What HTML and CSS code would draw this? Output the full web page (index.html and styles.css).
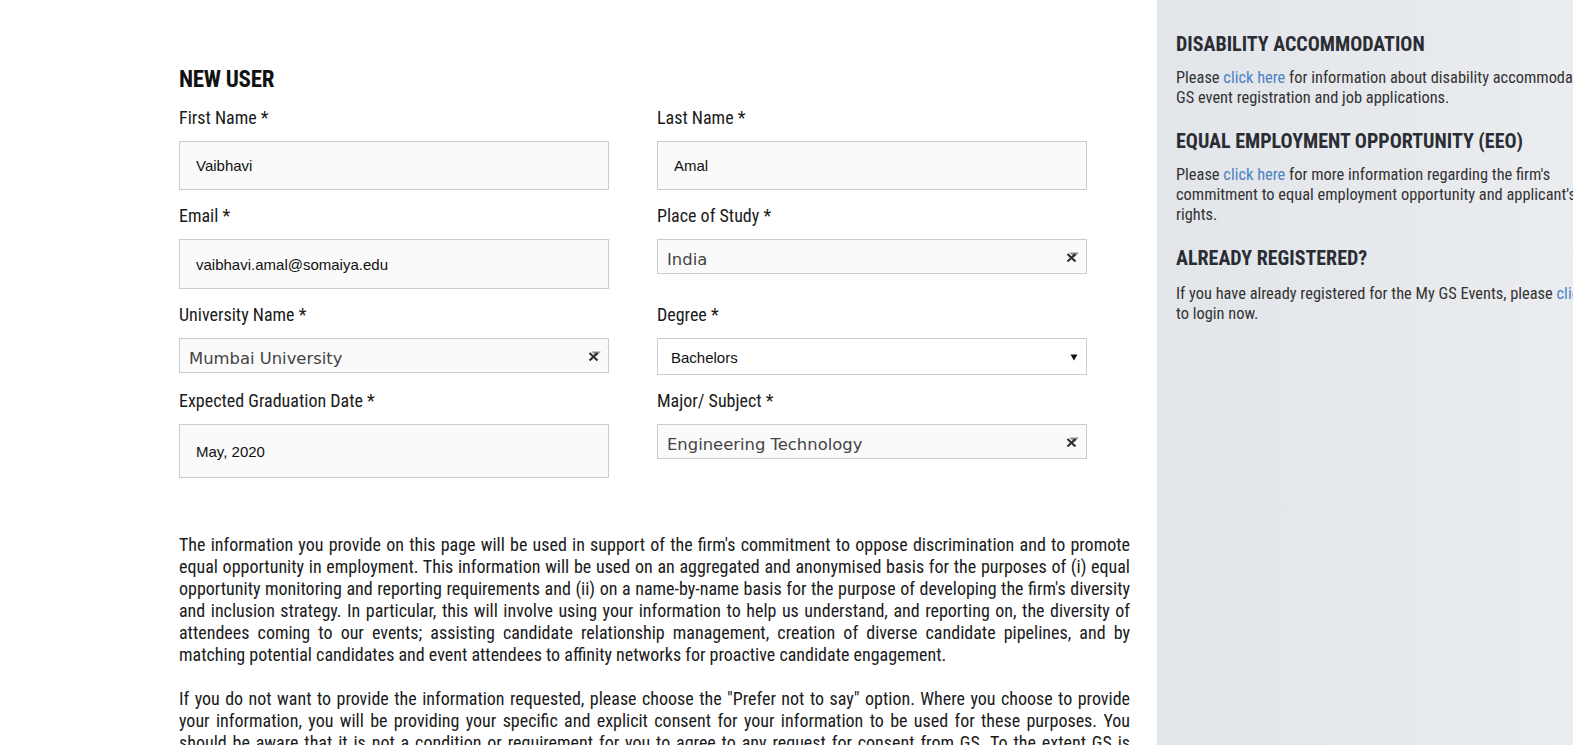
FILE: index.html
```html
<!DOCTYPE html>
<html lang="en">
<head>
<meta charset="utf-8">
<title>New User</title>
<link rel="stylesheet" href="styles.css">
</head>
<body>
<div class="page">
  <main class="main">
    <h1 class="title">NEW USER</h1>
    <div class="grid">
      <div class="field">
        <label class="label">First Name *</label>
        <input class="input h49" type="text" value="Vaibhavi">
      </div>
      <div class="field">
        <label class="label">Last Name *</label>
        <input class="input h49" type="text" value="Amal">
      </div>
      <div class="field">
        <label class="label">Email *</label>
        <input class="input h50" type="text" value="vaibhavi.amal@somaiya.edu">
      </div>
      <div class="field">
        <label class="label">Place of Study *</label>
        <div class="s2">
          <span class="s2-text">India</span>
          <svg class="s2-clear" width="13" height="10" viewBox="0 0 13 10"><path d="M3.5 0.5 H12.8 L8.2 5.5 Z" fill="#8c8c8c"/><path d="M1.5 2 L9.5 9.5 M9.5 2 L1.5 9.5" stroke="#2e2e2e" stroke-width="2.1"/></svg>
        </div>
      </div>
      <div class="field">
        <label class="label">University Name *</label>
        <div class="s2">
          <span class="s2-text">Mumbai University</span>
          <svg class="s2-clear" width="13" height="10" viewBox="0 0 13 10"><path d="M3.5 0.5 H12.8 L8.2 5.5 Z" fill="#8c8c8c"/><path d="M1.5 2 L9.5 9.5 M9.5 2 L1.5 9.5" stroke="#2e2e2e" stroke-width="2.1"/></svg>
        </div>
      </div>
      <div class="field">
        <label class="label">Degree *</label>
        <div class="select">
          <span class="select-text">Bachelors</span>
          <svg class="select-arrow" width="8" height="8" viewBox="0 0 8 8"><path d="M0.5 1.5 H7.5 L4 7.5 Z" fill="#111"/></svg>
        </div>
      </div>
      <div class="field">
        <label class="label">Expected Graduation Date *</label>
        <input class="input h54" type="text" value="May, 2020">
      </div>
      <div class="field">
        <label class="label">Major/ Subject *</label>
        <div class="s2">
          <span class="s2-text">Engineering Technology</span>
          <svg class="s2-clear" width="13" height="10" viewBox="0 0 13 10"><path d="M3.5 0.5 H12.8 L8.2 5.5 Z" fill="#8c8c8c"/><path d="M1.5 2 L9.5 9.5 M9.5 2 L1.5 9.5" stroke="#2e2e2e" stroke-width="2.1"/></svg>
        </div>
      </div>
    </div>
    <div class="info">
      <p><span class="ln">The information you provide on this page will be used in support of the firm's commitment to oppose discrimination and to promote</span><span class="ln">equal opportunity in employment. This information will be used on an aggregated and anonymised basis for the purposes of (i) equal</span><span class="ln">opportunity monitoring and reporting requirements and (ii) on a name-by-name basis for the purpose of developing the firm's diversity</span><span class="ln">and inclusion strategy. In particular, this will involve using your information to help us understand, and reporting on, the diversity of</span><span class="ln">attendees coming to our events; assisting candidate relationship management, creation of diverse candidate pipelines, and by</span>matching potential candidates and event attendees to affinity networks for proactive candidate engagement.</p>
      <p><span class="ln">If you do not want to provide the information requested, please choose the "Prefer not to say" option. Where you choose to provide</span><span class="ln">your information, you will be providing your specific and explicit consent for your information to be used for these purposes. You</span><span class="ln">should be aware that it is not a condition or requirement for you to agree to any request for consent from GS. To the extent GS is</span>relying on your consent to process this information, you may withdraw your consent at any time by updating your profile or contacting us.</p>
    </div>
  </main>
  <aside class="side">
    <h2 class="side-title">DISABILITY ACCOMMODATION</h2>
    <p class="side-text">Please <a href="#" class="link">click here</a> for information about disability accommodations for<br>GS event registration and job applications.</p>
    <h2 class="side-title">EQUAL EMPLOYMENT OPPORTUNITY (EEO)</h2>
    <p class="side-text">Please <a href="#" class="link">click here</a> for more information regarding the firm's<br>commitment to equal employment opportunity and applicant's<br>rights.</p>
    <h2 class="side-title last">ALREADY REGISTERED?</h2>
    <p class="side-text">If you have already registered for the My GS Events, please <a href="#" class="link">click here</a><br>to login now.</p>
  </aside>
</div>
</body>
</html>
```
FILE: styles.css
```css
html, body {
  margin: 0;
  padding: 0;
  overflow: hidden;
  background: #fff;
}
body {
  font-family: "Roboto Condensed", "Roboto", "Liberation Sans", sans-serif;
  font-stretch: condensed;
  color: #1a1a1a;
}
.page {
  display: flex;
  min-height: 100vh;
  width: 1700px;
}
.main {
  flex: none;
  width: 951px;
  padding: 65px 27px 0 179px;
}
.title {
  margin: 0 0 11px;
  font-size: 23px;
  line-height: 30px;
  letter-spacing: -0.3px;
  font-weight: 700;
  color: #111;
}
.grid {
  display: grid;
  grid-template-columns: 478px 1fr;
  align-items: start;
}
.field {
  display: flex;
  flex-direction: column;
  margin-bottom: 14px;
}
.label {
  display: block;
  font-size: 18px;
  line-height: 24px;
  margin-bottom: 11px;
  color: #1a1a1a;
}
.input {
  box-sizing: border-box;
  width: 430px;
  border: 1px solid #cccccc;
  background: #fafafa;
  padding: 0 0 0 16px;
  font-family: "Liberation Sans", Arial, sans-serif;
  font-stretch: normal;
  font-size: 15px;
  color: #111;
  outline: none;
  margin: 0;
}
.h49 { height: 49px; }
.h50 { height: 50px; }
.h54 { height: 54px; }
.s2 {
  box-sizing: border-box;
  width: 430px;
  height: 35px;
  border: 1px solid #cccccc;
  background: #fafafa;
  display: flex;
  align-items: center;
  padding: 5px 7px 0 9px;
}
.s2-text {
  flex: 1;
  font-family: "DejaVu Sans", Verdana, sans-serif;
  font-stretch: normal;
  font-size: 16.4px;
  color: #444;
}
.s2-clear {
  flex: none;
  margin-top: -4px;
}
.select {
  box-sizing: border-box;
  width: 430px;
  height: 37px;
  border: 1px solid #cccccc;
  background: #fff;
  display: flex;
  align-items: center;
  padding: 1px 8px 0 13px;
}
.select-text {
  flex: 1;
  font-family: "Liberation Sans", Arial, sans-serif;
  font-stretch: normal;
  font-size: 15px;
  color: #111;
}
.info {
  margin-top: 42px;
}
.info p {
  margin: 0 0 22px;
  font-size: 18px;
  line-height: 22px;
  text-align: justify;
  color: #1a1a1a;
}
.ln {
  display: block;
  text-align: justify;
  text-align-last: justify;
}
.side {
  flex: none;
  width: 480px;
  padding: 32px 0 0 19px;
  background: linear-gradient(to right, #e2e5e9, #eceef1);
}
.side-title {
  margin: 0 0 12px;
  font-size: 20px;
  line-height: 24px;
  font-weight: 700;
  color: #2a2d34;
}
.side-title.last {
  margin-bottom: 14px;
}
.side-text {
  margin: 0 0 21px;
  font-size: 16.4px;
  line-height: 20px;
  color: #333;
}
.link {
  color: #4d82c4;
  text-decoration: none;
}
```
